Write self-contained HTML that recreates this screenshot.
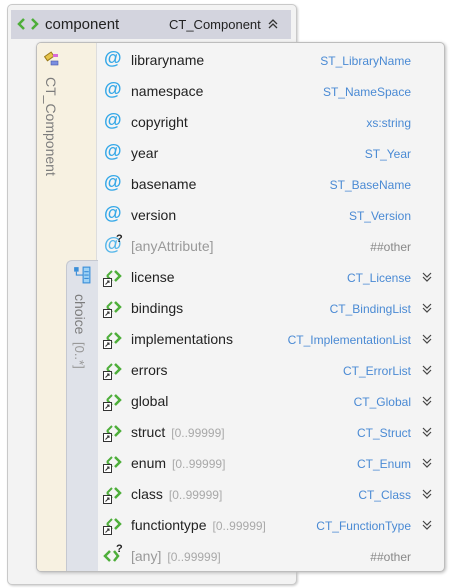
<!DOCTYPE html><html><head><meta charset="utf-8"><style>
*{margin:0;padding:0;box-sizing:border-box}
body{width:450px;height:588px;background:#fff;position:relative;overflow:hidden;font-family:"Liberation Sans","DejaVu Sans",sans-serif}
.outer{position:absolute;left:7px;top:4px;width:290px;height:581px;background:#f3f3f3;border:1px solid #c9c9c9;border-radius:5px;box-shadow:1px 1px 2px #ccc}
.hdr{position:absolute;left:11px;top:10px;width:280px;height:29px;background:#d3d4de}
.inner{position:absolute;left:36px;top:42px;width:409px;height:530px;background:#f4f4f4;border:1px solid #bdbdbd;border-radius:5px;box-shadow:1px 1px 3px #bbb;overflow:hidden}
.lc{position:absolute;left:0;top:0;width:60px;height:530px;background:#f7f1e1;border-right:1px solid #ddd}
.ch{position:absolute;left:29px;top:217px;width:32px;height:320px;background:#dfe2e9;border:1px solid #c5c8d0;border-radius:6px 0 0 0;border-right:none;border-bottom:none}
.vt{position:absolute;transform:rotate(90deg);transform-origin:0 0;white-space:nowrap;font-size:14px;color:#7c7c7c}
.row{position:absolute;left:0;width:450px;height:20px}
.n{position:absolute;left:131px;top:0;font-size:14px;color:#222;line-height:18px}
.o{color:#a9a9a9;font-size:12px;margin-left:6px}
.t{position:absolute;right:39px;top:1px;font-size:12px;color:#4a8ad4;line-height:18px}
.g{color:#888}
.cv{position:absolute;left:422px;top:2px;width:10px;height:14px}
.ic{position:absolute;left:102px;top:0}
.at{position:absolute;left:104px;top:-3px;font-size:18px;font-weight:bold;color:#35a8e8}
</style></head><body>
<div class="outer"></div>
<div class="hdr"></div>
<svg style="position:absolute;left:17px;top:17px" width="22" height="14" viewBox="0 0 22 14"><path d="M7 2L2 7L7 12M15 2L20 7L15 12" fill="none" stroke="#4eae3a" stroke-width="2.5"/></svg>
<div style="position:absolute;left:45px;top:16px;font-size:15px;color:#222">component</div>
<div style="position:absolute;left:169px;top:17px;font-size:13px;color:#222">CT_Component</div>
<svg style="position:absolute;left:268px;top:18px" width="10" height="12" viewBox="0 0 10 12"><path d="M1 6L5 2L9 6M1 10L5 6L9 10" fill="none" stroke="#333" stroke-width="1.3"/></svg>
<div class="inner"><div class="lc"></div><div class="ch"></div>
<div class="vt" style="left:22px;top:34px">CT_Component</div>
<div class="vt" style="left:51px;top:251px">choice <span style="color:#999;font-size:13px">&nbsp;[0..*]</span></div>
<svg style="position:absolute;left:7px;top:8px" width="18" height="16" viewBox="0 0 18 16"><rect x="1" y="3" width="8" height="5" transform="rotate(-35 5 5)" fill="#e6c34a" stroke="#9a7a1a"/><rect x="9" y="3" width="5" height="3" fill="#d86ad8"/><rect x="7" y="10" width="7" height="4" fill="#7a8ee0" stroke="#4455aa" stroke-width=".6"/></svg>
<svg style="position:absolute;left:36px;top:223px" width="18" height="18" viewBox="0 0 16 16"><rect x="1" y="1" width="4" height="4" fill="#3a8ed8"/><path d="M3 5V8H9" stroke="#3a8ed8" fill="none"/><rect x="9" y="1" width="6" height="14" fill="#9fd2f5" stroke="#3a8ed8"/><path d="M10 5H14M10 8H14M10 11H14" stroke="#3a8ed8"/></svg>
</div>
<div id="rows"></div>
<script>
var R=[["@","libraryname","ST_LibraryName"],["@","namespace","ST_NameSpace"],["@","copyright","xs:string"],["@","year","ST_Year"],["@","basename","ST_BaseName"],["@","version","ST_Version"],["@?","[anyAttribute]","##other"],
["e","license","CT_License"],["e","bindings","CT_BindingList"],["e","implementations","CT_ImplementationList"],["e","errors","CT_ErrorList"],["e","global","CT_Global"],["e","struct","CT_Struct","[0..99999]"],["e","enum","CT_Enum","[0..99999]"],["e","class","CT_Class","[0..99999]"],["e","functiontype","CT_FunctionType","[0..99999]"],["a","[any]","##other","[0..99999]"]];
var h="";
R.forEach(function(r,i){var y=51+i*31-(i>6?0.5:0);
var ic="";
if(r[0]=="@")ic='<div class="at">@</div>';
else if(r[0]=="@?")ic='<div class="at" style="color:#55b6ea">@</div><div style="position:absolute;left:116px;top:-4px;font-size:11px;font-weight:bold;color:#222">?</div>';
else if(r[0]=="e")ic='<svg class="ic" width="24" height="20" viewBox="0 0 24 20"><path d="M5 8L10 3M5 8L10 13" fill="none" stroke="#4eae3a" stroke-width="2"/><path d="M13 3L18 8L13 13" fill="none" stroke="#4eae3a" stroke-width="2.5"/><rect x="1.5" y="10.5" width="8" height="8" fill="#fff" stroke="#333"/><path d="M3.5 16.5L7 13M5 13H7V15" stroke="#333" fill="none"/></svg>';
else ic='<svg class="ic" width="24" height="20" viewBox="0 0 24 20"><path d="M8 4L3 9L8 14M12 4L16 9L12 14" fill="none" stroke="#4eae3a" stroke-width="2.5"/></svg><div style="position:absolute;left:116px;top:-4px;font-size:11px;font-weight:bold;color:#222">?</div>';
var grey=(r[0]=="@?"||r[0]=="a");
h+='<div class="row" style="top:'+y+'px">'+ic+'<div class="n"'+(grey?' style="color:#999"':'')+'>'+r[1]+(r[3]?'<span class="o">'+r[3]+'</span>':'')+'</div><div class="t'+(grey?' g':'')+'">'+r[2]+'</div>'+((r[0]=="e")?'<svg class="cv" viewBox="0 0 10 14"><path d="M1 3L5 7L9 3M1 7L5 11L9 7" fill="none" stroke="#444" stroke-width="1.2"/></svg>':'')+'</div>';});
document.getElementById("rows").innerHTML=h;
</script>
</body></html>
